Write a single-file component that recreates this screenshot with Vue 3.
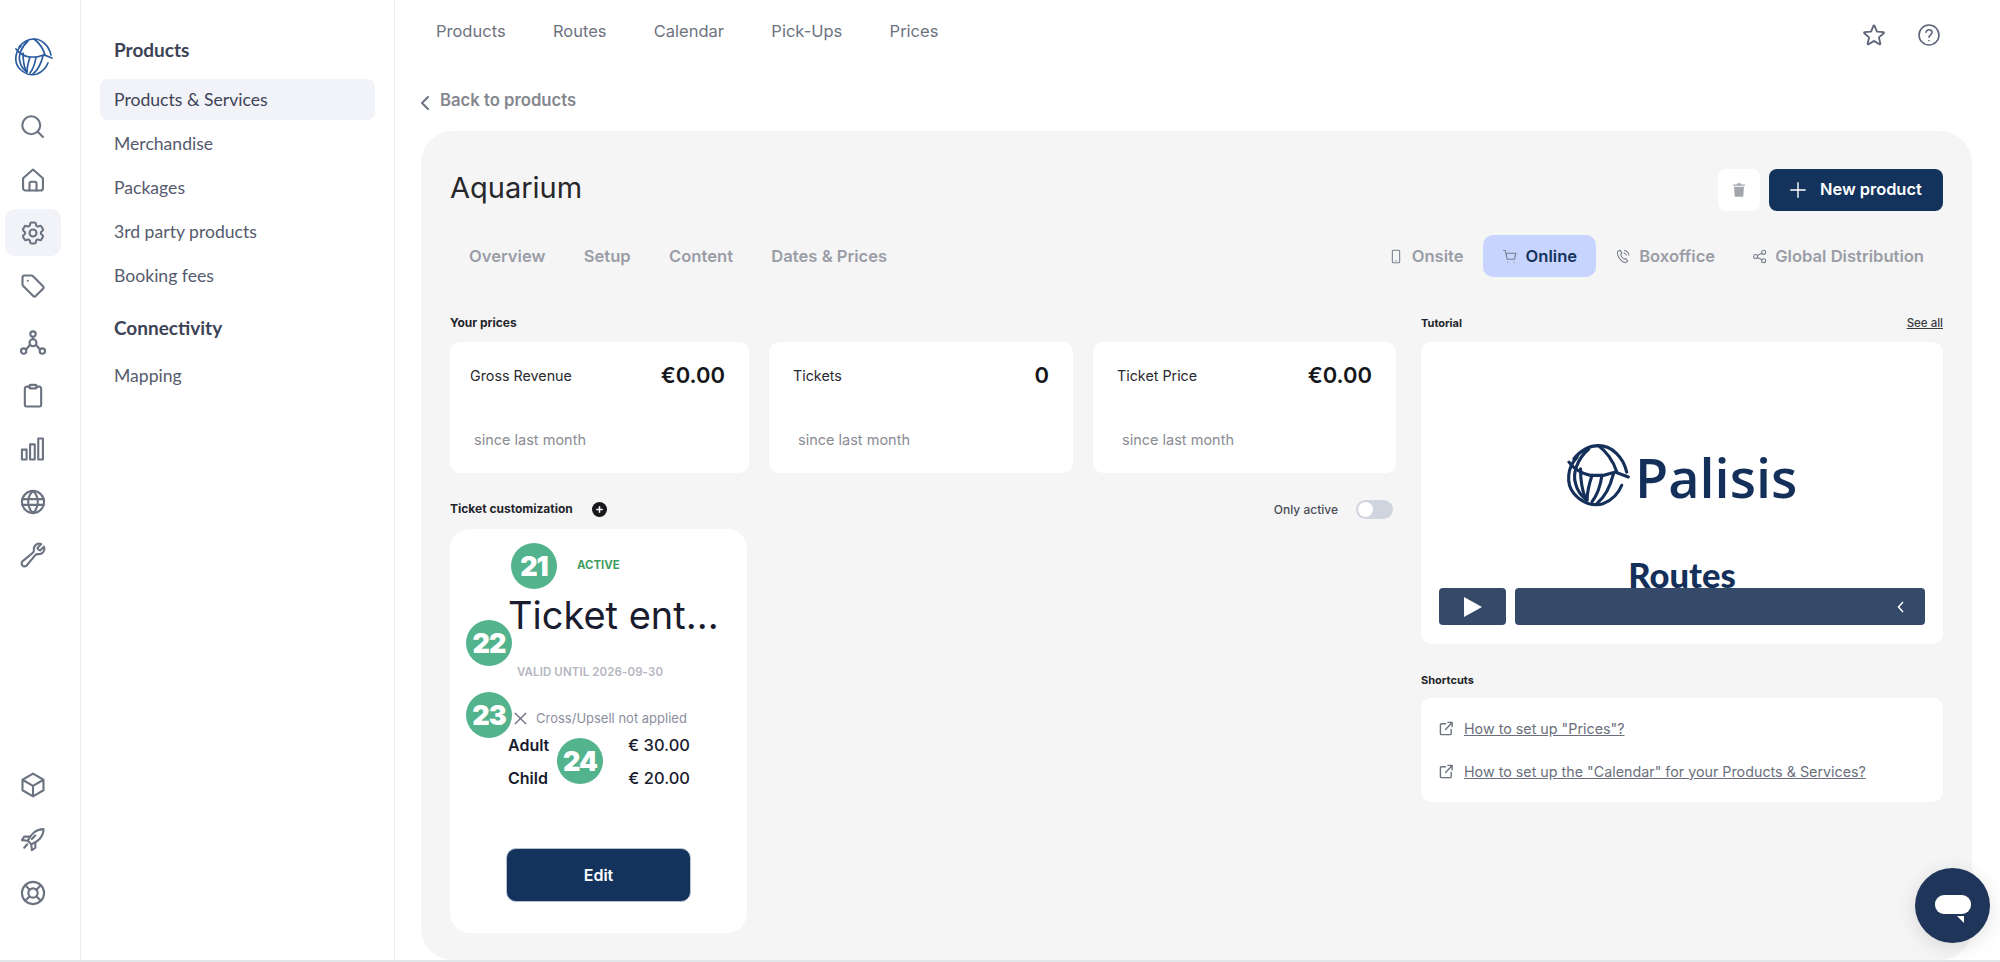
<template>
  <div class="page">
    <aside class="rail">
      <svg class="logo" viewBox="0 0 40 40" fill="none" stroke="#2a5c9e" stroke-width="1.7" stroke-linecap="round">
        <path v-for="(d, i) in logoPaths" :key="i" :d="d" />
      </svg>
      <div class="rail-top">
        <div v-for="item in topIcons" :key="item.name" class="rail-item" :class="{ active: item.name === 'settings', shifted: item.name === 'network' }">
          <svg viewBox="0 0 24 24" fill="none" stroke="#6b7280" stroke-width="1.8" stroke-linecap="round" stroke-linejoin="round">
            <path v-for="(d, i) in item.paths" :key="i" :d="d" />
          </svg>
        </div>
      </div>
      <div class="rail-bottom">
        <div v-for="item in bottomIcons" :key="item.name" class="rail-item">
          <svg viewBox="0 0 24 24" fill="none" stroke="#6b7280" stroke-width="1.8" stroke-linecap="round" stroke-linejoin="round">
            <path v-for="(d, i) in item.paths" :key="i" :d="d" />
          </svg>
        </div>
      </div>
    </aside>

    <nav class="sidebar">
      <h4>Products</h4>
      <a v-for="link in productLinks" :key="link" class="side-link" :class="{ current: link === 'Products & Services' }">{{ link }}</a>
      <h4 class="second">Connectivity</h4>
      <a class="side-link">Mapping</a>
    </nav>

    <main class="main">
      <header class="topbar">
        <div class="topnav">
          <a v-for="link in topLinks" :key="link">{{ link }}</a>
        </div>
        <div class="top-actions">
          <svg viewBox="0 0 24 24" fill="none" stroke="#5f6579" stroke-width="1.7" stroke-linejoin="round">
            <path d="M11.48 3.5a.56.56 0 011.04 0l2.13 5.11a.56.56 0 00.47.35l5.52.44c.5.04.7.66.32.99l-4.2 3.6a.56.56 0 00-.18.56l1.28 5.38a.56.56 0 01-.84.61l-4.72-2.88a.56.56 0 00-.59 0l-4.73 2.88a.56.56 0 01-.84-.61l1.29-5.38a.56.56 0 00-.18-.56l-4.2-3.6a.56.56 0 01.32-.99l5.52-.44a.56.56 0 00.47-.35z" />
          </svg>
          <svg viewBox="0 0 24 24" fill="none" stroke="#5f6579" stroke-width="1.5" stroke-linecap="round">
            <circle cx="12" cy="12" r="9.2" />
            <path d="M9.3 9.4c.3-1.4 1.4-2.2 2.8-2.2 1.5 0 2.7 1 2.7 2.4 0 2.2-2.8 2.2-2.8 4.4M12 17.2h.01" />
          </svg>
        </div>
      </header>

      <a class="back">
        <svg viewBox="0 0 10 16" fill="none" stroke="#6b7280" stroke-width="2" stroke-linecap="round" stroke-linejoin="round"><path d="M8 2 2 8l6 6" /></svg>
        Back to products
      </a>

      <section class="panel">
        <div class="panel-head">
          <h1>Aquarium</h1>
          <div class="head-actions">
            <button class="trash">
              <svg viewBox="0 0 14 16" fill="#a3a6ad"><path d="M5 0h4l.6 1.5H14v1.6H0V1.5h4.4zM1.2 4.2h11.6l-.8 11a1 1 0 0 1-1 .8H3a1 1 0 0 1-1-.8z" /></svg>
            </button>
            <button class="primary">
              <svg viewBox="0 0 16 16" fill="none" stroke="#fff" stroke-width="1.4" stroke-linecap="round"><path d="M8 .8v14.4M.8 8h14.4" /></svg>
              New product
            </button>
          </div>
        </div>

        <div class="tabs">
          <div class="tabs-left">
            <a v-for="tab in leftTabs" :key="tab">{{ tab }}</a>
          </div>
          <div class="tabs-right">
            <a v-for="tab in channelTabs" :key="tab.label" :class="{ on: tab.label === 'Online' }">
              <svg viewBox="0 0 24 24" fill="none" stroke="#777c8c" stroke-width="1.6" stroke-linecap="round" stroke-linejoin="round">
                <path v-for="(d, i) in tab.paths" :key="i" :d="d" />
              </svg>
              {{ tab.label }}
            </a>
          </div>
        </div>

        <div class="columns">
          <div class="col-left">
            <div class="label wide">Your prices</div>
            <div class="stats">
              <div v-for="stat in stats" :key="stat.label" class="stat">
                <div class="stat-top">
                  <span>{{ stat.label }}</span>
                  <strong>{{ stat.value }}</strong>
                </div>
                <div class="stat-note">since last month</div>
              </div>
            </div>

            <div class="ticket-head">
              <div class="ticket-title">
                <span class="label wide">Ticket customization</span>
                <svg viewBox="0 0 14 14"><circle cx="7" cy="7" r="7" fill="#17181c" /><path d="M7 4v6M4 7h6" stroke="#fff" stroke-width="1.4" /></svg>
              </div>
              <div class="only-active">
                <span>Only active</span>
                <i class="toggle"><b></b></i>
              </div>
            </div>

            <div class="ticket">
              <div class="status">ACTIVE</div>
              <div class="ticket-name">Ticket ent...</div>
              <div class="valid">VALID UNTIL 2026-09-30</div>
              <div class="upsell">
                <svg viewBox="0 0 14 14" fill="none" stroke="#6f7385" stroke-width="1.5"><path d="M1 1l12 12M13 1 1 13" /></svg>
                Cross/Upsell not applied
              </div>
              <div class="price-row"><span>Adult</span><span>€ 30.00</span></div>
              <div class="price-row"><span>Child</span><span>€ 20.00</span></div>
              <button class="edit">Edit</button>
              <span v-for="badge in badges" :key="badge.n" class="badge" :class="'b' + badge.n">{{ badge.n }}</span>
            </div>
          </div>

          <div class="col-right">
            <div class="label-row">
              <span class="label">Tutorial</span>
              <a class="see-all">See all</a>
            </div>
            <div class="video">
              <div class="brand">
                <svg viewBox="0 0 40 40" fill="none" stroke="#14305a" stroke-width="1.9" stroke-linecap="round">
                  <path v-for="(d, i) in logoPaths" :key="i" :d="d" />
                </svg>
                <span>Palisis</span>
              </div>
              <div class="routes">Routes</div>
              <div class="controls">
                <div class="play"><svg viewBox="0 0 18 20" fill="#fff"><path d="M0 0l18 10L0 20z" /></svg></div>
                <div class="track"><svg viewBox="0 0 8 12" fill="none" stroke="#fff" stroke-width="1.5"><path d="M6 1 1.5 6 6 11" /></svg></div>
              </div>
            </div>

            <div class="label shortcuts-label">Shortcuts</div>
            <div class="shortcuts">
              <a v-for="s in shortcuts" :key="s">
                <svg viewBox="0 0 16 16" fill="none" stroke="#6b7280" stroke-width="1.5" stroke-linecap="round" stroke-linejoin="round">
                  <path d="M7 3H2.5a1 1 0 0 0-1 1v9.5a1 1 0 0 0 1 1H12a1 1 0 0 0 1-1V9M7 9l7-7.5M9.5 1.5H14V6" />
                </svg>
                <span>{{ s }}</span>
              </a>
            </div>
          </div>
        </div>
      </section>
    </main>

    <div class="chat">
      <span class="bubble"></span>
      <span class="tail"></span>
    </div>
  </div>
</template>

<script setup>
const logoPaths = [
  'M8 8C2 14 1 24 6 30C11 36 18 38 24 36C29 34 33 30 35 25',
  'M6 9C10 4 15 1 21 1C29 1 36 8 38 17',
  'M3 11C6 15 11 18 16 19L24 19L31 17L39 20',
  'M15 3C8 9 5 18 7 24C8 28 11 32 14 34',
  'M10 15C10 22 11 28 13 33',
  'M17 19C15 25 14 30 14 34',
  'M23 19C22 26 20 31 17 35',
  'M30 18C28 26 25 32 20 36',
  'M21 1C25 4 30 10 32 17',
]

const topIcons = [
  { name: 'search', paths: ['M10.5 2.800a7.700 7.700 0 1 1 0 15.400 7.700 7.700 0 0 1 0-15.400z', 'M16.300 16.300 20.500 20.500'] },
  { name: 'home', paths: ['M3.500 10.500 12 3l8.500 7.500V19a2 2 0 0 1-2 2h-13a2 2 0 0 1-2-2z', 'M9 21v-6a1.500 1.500 0 0 1 1.500-1.500h3A1.500 1.500 0 0 1 15 15v6'] },
  { name: 'settings', paths: ['M9.594 3.94c.09-.542.56-.94 1.11-.94h2.593c.55 0 1.02.398 1.11.94l.213 1.281c.063.374.313.686.645.87.074.04.147.083.22.127.324.196.72.257 1.075.124l1.217-.456a1.125 1.125 0 011.37.49l1.296 2.247a1.125 1.125 0 01-.26 1.431l-1.003.827c-.293.24-.438.613-.431.992a6.759 6.759 0 010 .255c-.007.378.138.75.43.99l1.005.828c.424.35.534.954.26 1.43l-1.298 2.247a1.125 1.125 0 01-1.369.491l-1.217-.456c-.355-.133-.75-.072-1.076.124a6.57 6.57 0 01-.22.128c-.331.183-.581.495-.644.869l-.213 1.28c-.09.543-.56.941-1.11.941h-2.594c-.55 0-1.02-.398-1.11-.94l-.213-1.281c-.062-.374-.312-.686-.644-.87a6.52 6.52 0 01-.22-.127c-.325-.196-.72-.257-1.076-.124l-1.217.456a1.125 1.125 0 01-1.369-.49l-1.297-2.247a1.125 1.125 0 01.26-1.431l1.004-.827c.292-.24.437-.613.43-.992a6.932 6.932 0 010-.255c.007-.378-.138-.75-.43-.99l-1.004-.828a1.125 1.125 0 01-.26-1.43l1.297-2.247a1.125 1.125 0 011.37-.491l1.216.456c.356.133.751.072 1.076-.124.072-.044.146-.087.22-.128.332-.183.582-.495.644-.869l.214-1.281z', 'M15 12a3 3 0 1 1-6 0 3 3 0 0 1 6 0z'] },
  { name: 'tag', paths: ['M3 4.500A1.500 1.500 0 0 1 4.500 3h6.300a1.500 1.500 0 0 1 1 .4l8.800 8.800a1.500 1.500 0 0 1 0 2.100l-6.300 6.300a1.500 1.500 0 0 1-2.100 0L3.400 11.800a1.500 1.500 0 0 1-.4-1z', 'M7.500 7.500h.01'] },
  { name: 'network', paths: ['M12 8.800a3 3 0 1 1 0 6 3 3 0 0 1 0-6z', 'M12 2a2.300 2.300 0 1 1 0 4.600A2.300 2.300 0 0 1 12 2z', 'M4 16.600a2.300 2.300 0 1 1 0 4.600 2.300 2.300 0 0 1 0-4.600z', 'M20 16.600a2.300 2.300 0 1 1 0 4.600 2.300 2.300 0 0 1 0-4.600z', 'M12 6.600v2.200M9.500 13.500 6 17.600M14.500 13.500 18 17.600'] },
  { name: 'clipboard', paths: ['M9 4H6.500A1.500 1.500 0 0 0 5 5.500v14A1.500 1.500 0 0 0 6.500 21h11a1.500 1.500 0 0 0 1.500-1.500v-14A1.500 1.500 0 0 0 17.500 4H15', 'M10 2.500h4a1 1 0 0 1 1 1V5a.5.5 0 0 1-.5.5h-5A.5.5 0 0 1 9 5V3.500a1 1 0 0 1 1-1z'] },
  { name: 'stats', paths: ['M2.500 12.500h4v8.500h-4zM9.500 8h4v13h-4zM16.500 3h4v18h-4z'] },
  { name: 'globe', paths: ['M12 2.500a9.500 9.500 0 1 1 0 19 9.500 9.500 0 0 1 0-19z', 'M12 2.500c-5.500 5-5.500 14 0 19 5.500-5 5.500-14 0-19zM2.800 9.500h18.400M2.800 14.500h18.400'] },
  { name: 'wrench', paths: ['M21.750 6.750a4.500 4.500 0 01-4.884 4.484c-1.076-.091-2.264.071-2.950.904l-7.152 8.684a2.548 2.548 0 11-3.586-3.586l8.684-7.152c.833-.686.995-1.874.904-2.950a4.500 4.500 0 016.336-4.486l-3.276 3.276a3.004 3.004 0 002.250 2.250l3.276-3.276c.256.565.398 1.192.398 1.852z'] },
]

const bottomIcons = [
  { name: 'cube', paths: ['M21 7.500l-9-5.250L3 7.500m18 0l-9 5.250m9-5.250v9l-9 5.250M3 7.500l9 5.250M3 7.500v9l9 5.250m0-9v9'] },
  { name: 'rocket', paths: ['M7.500 13.500 10.500 16.500c5-1.500 10.500-6 10.500-13-7 0-11.500 5.500-13.500 10z', 'M8.500 10H4.500L2.500 13l5 .5', 'M14 15.500V19.500L11 21.500l-.5-5', 'M7 16.500 4.500 19.500', 'M11 12l3-3'] },
  { name: 'help', paths: ['M12 2.500a9.500 9.500 0 1 1 0 19 9.500 9.500 0 0 1 0-19z', 'M12 8a4 4 0 1 1 0 8 4 4 0 0 1 0-8z', 'M5.300 5.300 9.200 9.200M18.700 5.300 14.800 9.200M5.300 18.700l3.900-3.900M18.700 18.700l-3.900-3.900'] },
]

const productLinks = ['Products & Services', 'Merchandise', 'Packages', '3rd party products', 'Booking fees']
const topLinks = ['Products', 'Routes', 'Calendar', 'Pick-Ups', 'Prices']
const leftTabs = ['Overview', 'Setup', 'Content', 'Dates & Prices']

const channelTabs = [
  { label: 'Onsite', paths: ['M8 2.500h8a1.500 1.500 0 0 1 1.500 1.500v16a1.500 1.500 0 0 1-1.500 1.500H8A1.500 1.500 0 0 1 6.500 20V4A1.500 1.500 0 0 1 8 2.500z', 'M11.500 18.500h1'] },
  { label: 'Online', paths: ['M2.500 3h2.500l2.800 13h11l2-9H5.700', 'M8.500 20.500h.01M18 20.500h.01'] },
  { label: 'Boxoffice', paths: ['M7.500 2.500 4 4.500C2.500 11 8 19.500 15.500 21.500l3.500-2.500-3-4-2.500 1C11 14.500 9 11.500 8.500 8.500l2-1.500z', 'M14 3c3.500.5 6 3 7 7M14 7c1.500.5 2.500 1.500 3 3'] },
  { label: 'Global Distribution', paths: ['M17.500 2.500a3 3 0 1 1 0 6 3 3 0 0 1 0-6zM5.500 9a3 3 0 1 1 0 6 3 3 0 0 1 0-6zM17.500 15.500a3 3 0 1 1 0 6 3 3 0 0 1 0-6z', 'M8.200 10.500l6.600-3.500M8.200 13.500l6.600 3.500'] },
]

const stats = [
  { label: 'Gross Revenue', value: '€0.00' },
  { label: 'Tickets', value: '0' },
  { label: 'Ticket Price', value: '€0.00' },
]

const badges = [{ n: 21 }, { n: 22 }, { n: 23 }, { n: 24 }]

const shortcuts = ['How to set up "Prices"?', 'How to set up the "Calendar" for your Products & Services?']
</script>

<style>
html, body {
  margin: 0;
  background: #fff;
  overflow: hidden;
}
</style>

<style scoped>
* {
  box-sizing: border-box;
}

.page {
  display: flex;
  height: 962px;
  border-bottom: 2px solid #e1e6e6;
  font-family: Inter, "Liberation Sans", sans-serif;
  background: #fff;
  overflow: hidden;
}

.rail {
  width: 81px;
  flex-shrink: 0;
  border-right: 1px solid #e9ecf2;
  display: flex;
  flex-direction: column;
  align-items: flex-start;
  padding: 38px 0 44px 5px;
}

.logo {
  width: 40px;
  height: 40px;
  margin-left: 8px;
  margin-bottom: 25px;
}

.rail-top {
  display: flex;
  flex-direction: column;
  gap: 6px;
}

.rail-bottom {
  margin-top: auto;
  display: flex;
  flex-direction: column;
  gap: 7px;
}

.rail-item {
  width: 56px;
  height: 47px;
  border-radius: 10px;
  display: flex;
  align-items: center;
  justify-content: center;
}

.rail-item.shifted {
  margin-top: 4px;
}

.rail-item.active {
  background: #f2f3f8;
}

.rail-item svg {
  width: 28px;
  height: 28px;
}

.sidebar {
  width: 314px;
  flex-shrink: 0;
  border-right: 1px solid #e9ecf2;
  padding: 38px 19px 0 19px;
  font-family: Lato, "Liberation Sans", sans-serif;
}

.sidebar h4 {
  margin: 0 0 18px 14px;
  font-size: 19px;
  line-height: 23px;
  font-weight: 700;
  color: #3d4356;
}

.sidebar h4.second {
  margin-top: 20px;
  margin-bottom: 16px;
}

.side-link {
  display: flex;
  align-items: center;
  height: 41px;
  padding-left: 14px;
  margin-bottom: 2.900px;
  border-radius: 8px;
  font-size: 17.600px;
  color: #555b6e;
}

.side-link.current {
  background: #f2f3f8;
  color: #3d4356;
}

.main {
  flex: 1;
  min-width: 0;
  display: flex;
  flex-direction: column;
}

.topbar {
  height: 62px;
  flex-shrink: 0;
  display: flex;
  align-items: center;
  justify-content: space-between;
  padding: 0 58px 0 41px;
}

.topnav {
  display: flex;
  gap: 47.300px;
  font-size: 16.500px;
  color: #6e7380;
}

.top-actions {
  display: flex;
  gap: 29px;
  align-items: center;
  margin-top: 8px;
}

.top-actions svg {
  width: 26px;
  height: 26px;
}

.back {
  height: 69px;
  flex-shrink: 0;
  display: flex;
  align-items: center;
  gap: 10px;
  padding: 7px 0 0 25px;
  font-size: 16.700px;
  font-weight: 600;
  color: #85878f;
}

.back svg {
  width: 10px;
  height: 16px;
  margin-top: 6px;
}

.panel {
  flex: 1;
  margin: 0 28px 0 26px;
  background: #f5f5f5;
  border-radius: 32px;
  padding: 38px 29px 0;
}

.panel-head {
  display: flex;
  justify-content: space-between;
  align-items: center;
  height: 42px;
}

.panel-head h1 {
  margin: 0 0 6px;
  font-size: 29px;
  font-weight: 400;
  color: #26272b;
}

.head-actions {
  display: flex;
  gap: 9px;
}

.trash,
.primary,
.edit {
  border: none;
  font-family: inherit;
}

.trash {
  width: 42px;
  height: 42px;
  background: #fff;
  border-radius: 8px;
  display: flex;
  align-items: center;
  justify-content: center;
  padding: 0;
}

.trash svg {
  width: 12px;
  height: 14px;
}

.primary {
  width: 174px;
  height: 42px;
  background: #13335d;
  color: #fff;
  border-radius: 8px;
  display: flex;
  align-items: center;
  gap: 14px;
  padding: 0 0 2px 21px;
  font-size: 16.400px;
  font-weight: 600;
}

.primary svg {
  width: 16px;
  height: 16px;
  margin-top: 2px;
}

.tabs {
  display: flex;
  justify-content: space-between;
  align-items: center;
  height: 42px;
  margin-top: 24px;
  font-size: 16.600px;
  font-weight: 600;
  color: #9a9da6;
}

.tabs-left {
  display: flex;
  gap: 38.300px;
  padding-left: 19px;
}

.tabs-right {
  display: flex;
}

.tabs-right a {
  display: flex;
  align-items: center;
  gap: 8px;
  height: 42px;
  padding: 0 19px;
  border-radius: 10px;
}

.tabs-right a:last-child {
  gap: 7px;
  padding-left: 18px;
}

.tabs-right a.on {
  background: #c7d4fd;
  color: #13335d;
}

.tabs-right svg {
  width: 16px;
  height: 17px;
}

.columns {
  display: flex;
  gap: 25px;
  margin-top: 39px;
}

.col-left {
  width: 946px;
  flex-shrink: 0;
}

.col-right {
  flex: 1;
  min-width: 0;
}

.label {
  font-size: 11px;
  line-height: 14px;
  font-weight: 700;
  color: #24252a;
}

.label.wide {
  font-size: 12px;
}

.stats {
  display: grid;
  grid-template-columns: 299px 304px 303px;
  gap: 20px;
  margin-top: 12px;
}

.stat {
  height: 131px;
  background: #fff;
  border-radius: 10px;
  padding: 19px 24px 0 20px;
}

.stat + .stat {
  padding-left: 24px;
}

.stat-top {
  display: flex;
  justify-content: space-between;
  align-items: center;
  height: 28px;
  font-size: 14.300px;
  color: #2a2b30;
}

.stat-top strong {
  font-size: 22px;
  font-weight: 600;
  color: #15161a;
}

.stat-note {
  margin: 42px 0 0 4px;
  font-size: 14.500px;
  line-height: 17px;
  color: #8a8b93;
}

.stat + .stat .stat-note {
  margin-left: 5px;
}

.ticket-head {
  display: flex;
  justify-content: space-between;
  align-items: center;
  height: 20px;
  margin-top: 26px;
  padding-right: 3px;
}

.ticket-title {
  display: flex;
  align-items: center;
  gap: 19px;
}

.ticket-title svg {
  width: 15px;
  height: 15px;
}

.only-active {
  display: flex;
  align-items: center;
  gap: 18px;
  font-size: 12px;
  font-weight: 500;
  color: #4a4c55;
}

.toggle {
  width: 37px;
  height: 19px;
  background: #cfd4de;
  border-radius: 10px;
  display: block;
  padding: 2px;
}

.toggle b {
  display: block;
  width: 15px;
  height: 15px;
  background: #fff;
  border-radius: 50%;
}

.ticket {
  position: relative;
  width: 297px;
  height: 404px;
  margin-top: 10px;
  background: #fff;
  border-radius: 20px;
  padding: 28px 57px 0 58px;
  color: #191c2e;
}

.status {
  margin-left: 69px;
  font-size: 11.400px;
  line-height: 16px;
  font-weight: 700;
  color: #3f9d5f;
}

.ticket-name {
  margin-top: 18px;
  font-size: 38px;
  line-height: 48px;
  white-space: nowrap;
}

.valid {
  margin: 26px 0 0 9px;
  font-size: 11.500px;
  line-height: 14px;
  font-weight: 600;
  letter-spacing: 0.1px;
  color: #b5b6bf;
  white-space: nowrap;
}

.upsell {
  display: flex;
  align-items: center;
  gap: 9px;
  margin: 31px 0 0 6px;
  font-size: 13px;
  line-height: 16px;
  color: #8b8e9e;
  white-space: nowrap;
}

.upsell svg {
  width: 13px;
  height: 13px;
}

.price-row {
  display: flex;
  justify-content: space-between;
  font-size: 16px;
  line-height: 20px;
  font-weight: 600;
  margin-top: 9px;
}

.price-row + .price-row {
  margin-top: 13px;
}

.price-row span:last-child {
  font-size: 16.500px;
  font-weight: 500;
}

.edit {
  display: block;
  width: 185px;
  height: 54px;
  margin: 59.500px 0 0 -2px;
  background: #13335d;
  border: 1px solid #b8c0cf;
  border-radius: 10px;
  color: #fff;
  font-size: 16px;
  font-weight: 600;
}

.badge {
  position: absolute;
  width: 46px;
  height: 46px;
  border-radius: 50%;
  background: #53b38c;
  color: #fff;
  display: flex;
  align-items: center;
  justify-content: center;
  font-size: 27px;
  font-weight: 900;
  letter-spacing: -1px;
}

.b21 { left: 61px; top: 14px; }
.b22 { left: 16px; top: 91px; }
.b23 { left: 16px; top: 163px; }
.b24 { left: 107px; top: 209px; }

.label-row {
  display: flex;
  justify-content: space-between;
}

.see-all {
  font-size: 11.500px;
  line-height: 14px;
  font-weight: 500;
  color: #3a3c44;
  text-decoration: underline;
}

.video {
  position: relative;
  height: 302px;
  margin-top: 12px;
  background: #fff;
  border-radius: 10px;
  overflow: hidden;
}

.brand {
  position: absolute;
  left: 143px;
  top: 102px;
  display: flex;
  align-items: center;
  gap: 5px;
  color: #14305a;
  font-family: "Open Sans", sans-serif;
  font-size: 54px;
  font-weight: 600;
  line-height: 66px;
}

.brand svg {
  width: 66px;
  height: 66px;
}

.routes {
  position: absolute;
  left: 0;
  right: 0;
  top: 214px;
  text-align: center;
  font-family: Lato, sans-serif;
  font-size: 34.500px;
  line-height: 38px;
  font-weight: 900;
  color: #14305a;
}

.controls {
  position: absolute;
  left: 18px;
  right: 18px;
  top: 246px;
  height: 37px;
  display: flex;
  gap: 9px;
}

.play {
  width: 67px;
  border-radius: 4px;
  background: #354a69;
  display: flex;
  align-items: center;
  justify-content: center;
}

.play svg {
  width: 18px;
  height: 20px;
}

.track {
  flex: 1;
  border-radius: 4px;
  background: #354a69;
  display: flex;
  align-items: center;
  justify-content: flex-end;
  padding-right: 20px;
}

.track svg {
  width: 8px;
  height: 12px;
}

.shortcuts-label {
  margin-top: 29px;
}

.shortcuts {
  height: 104px;
  margin-top: 11px;
  background: #fff;
  border-radius: 10px;
  padding: 20px 18px 0;
  display: flex;
  flex-direction: column;
  gap: 23px;
}

.shortcuts a {
  display: flex;
  align-items: center;
  gap: 10px;
  height: 20px;
  font-size: 14.300px;
  color: #6b6f7c;
}

.shortcuts span {
  text-decoration: underline;
}

.shortcuts svg {
  width: 15px;
  height: 15px;
}

.chat {
  position: fixed;
  left: 1915px;
  top: 868px;
  width: 75px;
  height: 75px;
  border-radius: 50%;
  background: #20355a;
  box-shadow: 0 4px 20px rgba(0, 0, 0, 0.12);
}

.bubble {
  position: absolute;
  left: 20px;
  top: 27px;
  width: 36px;
  height: 19px;
  background: #fff;
  border-radius: 9px;
}

.tail {
  position: absolute;
  left: 42px;
  top: 48px;
  width: 0;
  height: 0;
  border-top: 7px solid #fff;
  border-left: 7px solid transparent;
}
</style>
